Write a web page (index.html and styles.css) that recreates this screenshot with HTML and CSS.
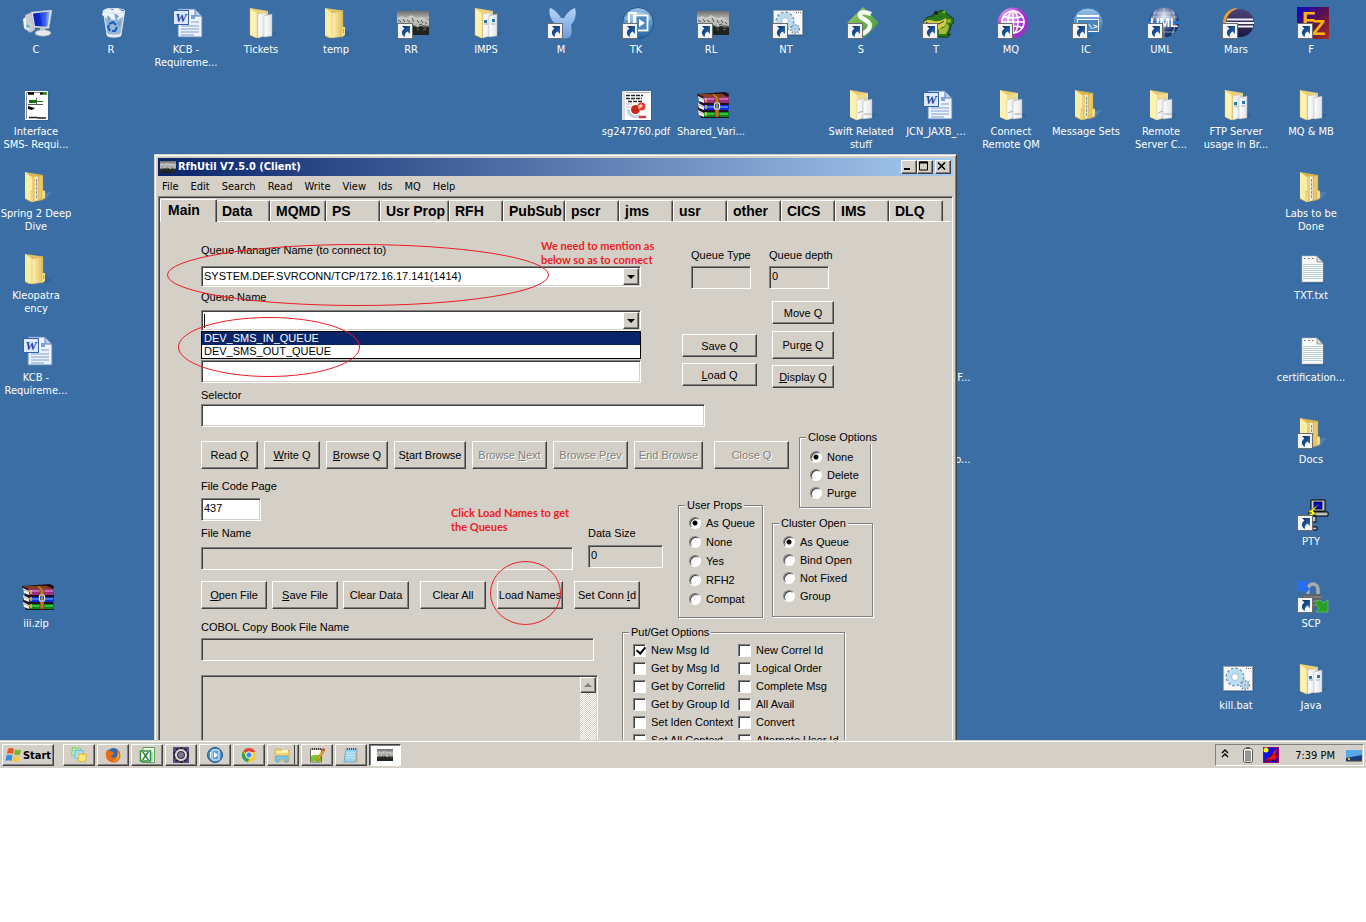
FILE: index.html
```html
<!DOCTYPE html>
<html lang="en">
<head>
<meta charset="utf-8">
<title>RfhUtil V7.5.0 (Client)</title>
<link rel="stylesheet" href="styles.css">
</head>
<body>
<svg class="sprite" aria-hidden="true">
  <defs>
    <linearGradient id="gFold" x1="0" x2="1"><stop offset="0" stop-color="#fdf3b4"/><stop offset="1" stop-color="#e0bc58"/></linearGradient>
    <linearGradient id="gPaper" x1="0" x2="1"><stop offset="0" stop-color="#fff"/><stop offset="1" stop-color="#dfe3e6"/></linearGradient>
    <linearGradient id="gScreen" x1="0" x2="1"><stop offset="0" stop-color="#0a1cb4"/><stop offset=".55" stop-color="#1030d8"/><stop offset="1" stop-color="#9cc4ff"/></linearGradient>
    <linearGradient id="gBlue" x1="0" y1="0" x2="0" y2="1"><stop offset="0" stop-color="#9cc4e8"/><stop offset="1" stop-color="#1c62a4"/></linearGradient>
    <linearGradient id="gArrow" x1="0" y1="0" x2="1" y2="1"><stop offset="0" stop-color="#0c2c64"/><stop offset="1" stop-color="#2a78c8"/></linearGradient>
    <linearGradient id="gFox" x1="0" y1="0" x2="0" y2="1"><stop offset="0" stop-color="#b4d4f8"/><stop offset="1" stop-color="#6c9cdc"/></linearGradient>
    <linearGradient id="gSky" x1="0" y1="0" x2="0" y2="1"><stop offset="0" stop-color="#6c6c6c"/><stop offset=".3" stop-color="#b4b4b0"/><stop offset=".6" stop-color="#6a6c6a"/><stop offset="1" stop-color="#141614"/></linearGradient>
    <linearGradient id="gFz" x1="0" x2="1" y1="0" y2="1"><stop offset="0" stop-color="#0808c8"/><stop offset=".5" stop-color="#5a1050"/><stop offset="1" stop-color="#a83020"/></linearGradient>
    <linearGradient id="gMars" x1="0" y1="0" x2="0" y2="1"><stop offset="0" stop-color="#4c4478"/><stop offset="1" stop-color="#1c1840"/></linearGradient>
    <radialGradient id="gMq" cx=".35" cy=".3"><stop offset="0" stop-color="#f0b8fc"/><stop offset="1" stop-color="#a030cc"/></radialGradient>
    <radialGradient id="gUml" cx=".5" cy=".3"><stop offset="0" stop-color="#e8eef8"/><stop offset="1" stop-color="#1c3470"/></radialGradient>
    <linearGradient id="gGreen" x1="0" y1="0" x2="1" y2="1"><stop offset="0" stop-color="#98d068"/><stop offset="1" stop-color="#3c9038"/></linearGradient>
  </defs>
  <symbol id="arrow" viewBox="0 0 32 32">
    <rect x=".5" y="16.500" width="15" height="15" fill="#f4f4f4" stroke="#6c6c6c"/>
    <path d="M5 19h8v8l-2.500-2.500c-2 1-3 3-2.500 5.500C4 28 4 24 7.500 21.500z" fill="url(#gArrow)"/>
  </symbol>
  <symbol id="computer" viewBox="0 0 32 32">
    <path d="M3 8l7-3 3 1v17l-5 3-5-4z" fill="#c8ccd0" stroke="#6c747c" stroke-width=".6"/>
    <path d="M1 12l1 9 2 2V10zM4 21h3v3z" fill="#f4f4f0"/><circle cx="6" cy="19" r="1.500" fill="#48b8d8"/>
    <path d="M9 5l20-2 1 .5-3 18-15-1z" fill="#dfe3e6" stroke="#a0a6b0" stroke-width=".5"/>
    <path d="M11 6.500L28 4.500l-2.500 15.300-12.500-.8z" fill="url(#gScreen)"/><path d="M18 6l7-1-3 14-2-.3z" fill="#3864f0" opacity=".6"/>
    <path d="M18 20h5l1 5h-6z" fill="#c4c8cc"/><ellipse cx="21" cy="26" rx="8" ry="3.200" fill="#e8eaec" stroke="#9098a0" stroke-width=".6"/>
  </symbol>
  <symbol id="bin" viewBox="0 0 32 32">
    <path d="M6 4h22l-3.500 24c-1 3-14 3-15 0z" fill="#a8c4dc" opacity=".85"/>
    <path d="M6 4l5-3 4 2 5-2 5 3 3 1-2 5-6 3-9-1-6-4z" fill="#f0f4f8"/>
    <path d="M10 8l4 3-3 4zM17 6l5 3-3 5zM20 16l4-3-1 7z" fill="#7ca0c4"/>
    <path d="M12 17l4-2 3 3M20 20l-2 4h-3M13 24l-2-4 1-2" fill="none" stroke="#1c60c4" stroke-width="2.200"/>
    <path d="M7 7l3 20M27 7l-3 20" stroke="#dce8f0" stroke-width="1"/><path d="M9.500 26c3 2 12 2 15 0l-.5 3c-3 2-11 2-14 0z" fill="#e4ecf0"/>
    <ellipse cx="17" cy="4" rx="11" ry="2.500" fill="none" stroke="#d4e4f0"/>
  </symbol>
  <symbol id="word" viewBox="0 0 32 32">
    <path d="M6 2h17l7 7v21H6z" fill="#eef4fe" stroke="#5a80b8"/><path d="M23 2v7h7z" fill="#b8ccec" stroke="#5a80b8"/>
    <rect x="19" y="8" width="4" height="4" fill="#7ca0d4"/><path d="M19 15h8M9 19h18M9 22h18M9 25h18M9 28h13" stroke="#7c9cd0"/>
    <rect x="1.500" y="3.500" width="15" height="14" fill="#dce8fc" stroke="#3460ac"/><text x="9" y="15" class="gw">W</text>
  </symbol>
  <symbol id="folder" viewBox="0 0 32 32">
    <path d="M22 22l8 5-8 4z" fill="#28527f" opacity=".35"/>
    <path d="M3 1l18 2.500v25.500l-14 2-4-2z" fill="#e2c368"/><path d="M3 1l7 5v25l-7-3z" fill="#fbeea4"/>
    <path d="M10 6l11-2.500v26L10 31z" fill="url(#gFold)" stroke="#c4a048" stroke-width=".4"/><path d="M20 20h3v8l-3 2z" fill="#f4dc84"/><rect x="21" y="22" width="1" height="4" fill="#6cb8e0"/>
  </symbol>
  <symbol id="docs" viewBox="0 0 32 32">
    <path d="M23 22l7 4-7 5z" fill="#28527f" opacity=".35"/>
    <path d="M3 1l18 3v25l-12 2-6-3z" fill="#ecd078"/><path d="M3 1l7 5v25l-7-3z" fill="#fdf2b0" stroke="#d8b458" stroke-width=".4"/>
    <path d="M11 7l8-1.500v22.500l-8 3z" fill="url(#gPaper)" stroke="#b8bcc0" stroke-width=".4"/>
    <path d="M17 9l8-2v22l-8 1z" fill="url(#gPaper)" stroke="#a8b0b4" stroke-width=".5"/>
  </symbol>
  <symbol id="docsblue" viewBox="0 0 32 32"><use href="#docs"/><path d="M12 13h3v3h-3zM20 12h3v3h-3z" fill="#2c78a8"/><path d="M12 17h4M19 17h4" stroke="#8cb4cc"/></symbol>
  <symbol id="docslow" viewBox="0 0 32 32">
    <path d="M23 22l7 4-7 5z" fill="#28527f" opacity=".35"/>
    <path d="M3 1l18 3v25l-12 2-6-3z" fill="#e6c870"/><path d="M3 1l7 5v25l-7-3z" fill="#fdf2b0"/><path d="M10 6l11-2v8l-11 2z" fill="#f0dc8c"/>
    <path d="M10 11l8-2v19l-8 3z" fill="url(#gPaper)" stroke="#a8acb0" stroke-width=".4"/><path d="M16 12l9-2v19l-9 1z" fill="url(#gPaper)" stroke="#a0a8ac" stroke-width=".5"/><path d="M11 24l5-2M17 25h8" stroke="#a8acb0"/>
  </symbol>
  <symbol id="stack" viewBox="0 0 32 32">
    <path d="M22 22l8-1-8 9z" fill="#6c98c4" opacity=".5"/>
    <path d="M3 1l18 3v25l-12 2-6-3z" fill="#d8b450"/><path d="M3 1l7 5v25l-7-4z" fill="#fbeea4"/>
    <path d="M10 6l4-1v25l-4 1z" fill="#eccf74"/><path d="M13 6l3-.5V29l-3 1z" fill="#f4f0e0"/><path d="M14.500 8v20" stroke="#8090b0" stroke-dasharray="3 1"/><path d="M16 5l5-1v24l-5 2z" fill="#e8c868" stroke="#b89038" stroke-width=".4"/><path d="M9 20l2 1v10h-2zM20 19l3 1v7l-3 2z" fill="#f8e494" stroke="#c09838" stroke-width=".4"/>
  </symbol>
  <symbol id="photo" viewBox="0 0 32 24">
    <rect width="32" height="24" fill="url(#gSky)"/>
    <path d="M0 7l5-2 4 2 5-3 6 3 5-1 7 4v5l-6-1-5 2-6-3-5 2-5-1-5 2z" fill="#d4d4d0" opacity=".7"/>
    <path d="M1 9l3 2M6 8l2 3M10 9l3 2M15 7l2 4M20 9l2 3M24 9l2 3M28 11l2 2M4 13l2-1M13 13l2-1M22 14l3-1" fill="none" stroke="#444" stroke-width=".9"/>
    <path d="M0 17l3-2 3 2 4-2 3 1 4-1 3 2 4-2 3 2 5-1v8H0z" fill="#20241e"/><path d="M2 19l3-1M12 17l2 1M20 18l2 1M26 19l3-1" stroke="#6c7068"/>
  </symbol>
  <symbol id="shot" viewBox="0 0 32 32"><use href="#photo" x="0" y="4" width="32" height="24"/></symbol>
  <symbol id="fox" viewBox="0 0 32 32"><path d="M3 1c4 1 9 6 11 10h3c2-4 7-9 11-10 2 6 0 13-4 17 1 5 1 9-1 12-5 3-11 1-13 0V18C4 14 1 7 3 1z" fill="url(#gFox)"/></symbol>
  <symbol id="play" viewBox="0 0 32 32">
    <circle cx="16" cy="16" r="15.500" fill="url(#gBlue)" stroke="#1c5488"/><path d="M3 12C8 3 24 3 29 12c-8 6-18 6-26 0z" fill="#fff" opacity=".3"/>
    <path d="M11 6H7v13M15 6h-3v13" fill="none" stroke="#fff" stroke-width="2"/><rect x="13.500" y="8.500" width="12" height="15" fill="#4888bc" stroke="#fff" stroke-width="1.800"/><path d="M17 12l6 4-6 4z" fill="#fff"/>
  </symbol>
  <symbol id="gears" viewBox="0 0 32 32">
    <rect x="2" y="4" width="30" height="25" fill="#28527f" opacity=".5"/><rect x="1.500" y="3.500" width="29" height="24" fill="#f6f8fa" stroke="#9ca4ac"/><path d="M24 5.500h5" stroke="#567" stroke-dasharray="1 1"/>
    <circle cx="13" cy="14" r="8" fill="none" stroke="#7494b4" stroke-width="3" stroke-dasharray="2.500 1.700"/><circle cx="13" cy="14" r="6" fill="none" stroke="#b8dcf0" stroke-width="4.500"/><circle cx="13" cy="14" r="3.500" fill="#fff" stroke="#6c90b0" stroke-width=".6"/>
    <circle cx="23" cy="22" r="4" fill="none" stroke="#6c8cac" stroke-width="2" stroke-dasharray="1.500 1.100"/><circle cx="23" cy="22" r="2.700" fill="#fff" stroke="#a8cce4" stroke-width="2"/><circle cx="23" cy="22" r="1" fill="#6c8cac"/>
  </symbol>
  <symbol id="soap" viewBox="0 0 32 32">
    <path d="M16 0l16 16-16 16L0 16z" fill="url(#gGreen)"/><path d="M24 7c-7-3-12-2-11 2 1 3 9 4 10 9 0 4-4 8-9 9" fill="none" stroke="#f4faf0" stroke-width="4.500"/>
  </symbol>
  <symbol id="frog" viewBox="0 0 32 32">
    <path d="M11 9c0-4 3-5 5-3 2-4 7-3 8 0l5 4c4 1 4 6 0 8-1 5-2 9-4 10l4-1-3 3h-8L7 26 3 20c-3-4 0-11 8-11z" fill="#2c7818" stroke="#123808"/>
    <path d="M2 15c3-3 7-2 10-1 5 1 8-1 12-3 2 5-1 9-5 10-6 5-15 2-17-6z" fill="#d8c848"/><circle cx="14" cy="6" r="2" fill="#182808"/><circle cx="22" cy="5" r="1.500" fill="#70b830"/><path d="M4 15c5 4 13 3 18-1M20 20l6 7" fill="none" stroke="#204808"/><circle cx="27" cy="14" r="2" fill="#98b030"/><path d="M17 22c4 0 7-3 8-6l2 4-3 7h-7z" fill="#a8b838"/>
  </symbol>
  <symbol id="globe" viewBox="0 0 32 32">
    <circle cx="16" cy="16" r="15.500" fill="url(#gMq)"/><g fill="none" stroke="#fff" stroke-width="1.600"><circle cx="16" cy="15" r="11"/><ellipse cx="16" cy="15" rx="5" ry="11"/><path d="M5 15h22M16 4v22M7 9.500c6 2 12 2 18 0M7 20.500c6-2 12-2 18 0"/></g>
  </symbol>
  <symbol id="term" viewBox="0 0 32 32">
    <circle cx="16" cy="16" r="15" fill="url(#gBlue)" stroke="#3878b0"/><path d="M5 9h22" stroke="#fff" stroke-width="2"/><rect x="5.500" y="12.500" width="21" height="12" fill="#4888bc" stroke="#fff"/><text x="16" y="22" class="gt">C:\&gt;</text>
  </symbol>
  <symbol id="uml" viewBox="0 0 32 32">
    <circle cx="17" cy="15.500" r="15" fill="url(#gUml)"/><path d="M4 10h26M6 6h22M6 25h22M17 1v30M9 3c-4 8-4 17 0 25M25 3c4 8 4 17 0 25" fill="none" stroke="#dce8f4" stroke-width=".6"/>
    <rect x="1" y="14" width="31" height="3" fill="#2474cc"/><text x="17" y="20" class="gu">UML</text>
  </symbol>
  <symbol id="mars" viewBox="0 0 32 32">
    <path d="M16 1C6 1 1 8 1 16s5 13 11 14C4 20 6 6 16 1z" fill="#f09c34"/><circle cx="18" cy="16" r="14" fill="url(#gMars)"/><path d="M5 12.500h26M4 16h28M5 19.500h26" stroke="#f0f0f8" stroke-width="1.800"/>
  </symbol>
  <symbol id="fz" viewBox="0 0 32 32"><rect width="32" height="32" fill="url(#gFz)"/><text x="5" y="20" class="gf">F</text><text x="15" y="28" class="gf">Z</text></symbol>
  <symbol id="thumb" viewBox="0 0 32 32">
    <rect x="4" y="3" width="24" height="29" fill="#28527f" opacity=".5"/><rect x="3" y="2" width="23" height="29" fill="#fff"/><path d="M4.500 30V3.500H24" fill="none" stroke="#888"/>
    <path d="M6 4.500h6" stroke="#000" stroke-width="2.500"/><path d="M18 4.500h3" stroke="#0a200a" stroke-width="2.500"/><path d="M21 4.500h4" stroke="#2a8410" stroke-width="2.500"/><path d="M7 12.500h7" stroke="#087808" stroke-width="3"/><path d="M15 12.500h6" stroke="#087808"/><path d="M14.500 9v6M6 15.500h15" stroke="#555"/><path d="M6 17l3 1 4 1-3 2-4-1z" fill="#000"/><path d="M7 28.500h8M15 29h9" stroke="#222" stroke-width="1.400"/>
  </symbol>
  <symbol id="pdf" viewBox="0 0 32 32">
    <rect x="1" y="3" width="29" height="29" fill="#28527f" opacity=".5"/><rect x="0" y="2" width="29" height="29" fill="#fff"/><rect x="0" y="2" width="3" height="29" fill="#dcdce4"/>
    <path d="M4 6.500h17M4 9.500h16M6 12.500h14" stroke="#222" stroke-width="1.600" stroke-dasharray="4 1"/><path d="M4 3.500h24" stroke="#aab"/><path d="M6 20c0 7 7 9 12 7" fill="none" stroke="#c8d0dc" stroke-width="3"/><path d="M4 15h6M4 18h5" stroke="#d8b0a8"/><circle cx="13.500" cy="20.500" r="4.500" fill="#c82818"/><circle cx="19.500" cy="17.500" r="4" fill="#e04030"/><path d="M16 17l3-2 2 2-4 3z" fill="#f8c8c0"/><path d="M17 28h7" stroke="#d83838" stroke-width="2.500"/>
  </symbol>
  <symbol id="rar" viewBox="0 0 32 32">
    <path d="M0 5l3 8-2 7 3 9h28v-6l-2-3 2-3v-4l-1-3 1-5-4-2z" fill="#20101c"/>
    <path d="M1 5h24l6 3H7z" fill="#883c20"/><path d="M6 8h26v6H7z" fill="#983080"/><path d="M7 10h24" stroke="#e088d0" stroke-width="1.300"/>
    <path d="M7 16h25v5H7z" fill="#1030d8"/><path d="M7 18h24" stroke="#6c98ff" stroke-width="1.300"/><path d="M7 23h25v5H7z" fill="#088818"/><path d="M7 25h24" stroke="#50d858" stroke-width="1.300"/>
    <path d="M1 7l6 3v4l-5-2zM1 14l6 3v4l-5-2zM1 21l6 3v4l-5-2z" fill="#f4f0e8"/><path d="M2 9l5 2M2 16l5 2M2 23l5 2" stroke="#888" stroke-width=".6"/>
    <path d="M9 9v18" stroke="#e8c040" stroke-width="1.500" stroke-dasharray="4 3"/><path d="M14 5h4l4 4v19h-4V9z" fill="#b87828" stroke="#583008" stroke-width=".6"/><rect x="17.500" y="14" width="5" height="6" rx="1" fill="#444" stroke="#e8e8e8" stroke-width="1.200"/><path d="M20 15v6" stroke="#ccc"/>
  </symbol>
  <symbol id="txt" viewBox="0 0 32 32">
    <path d="M6 5h15l6 6v20H6z" fill="#28527f" opacity=".6"/><path d="M5 3h15l6 6v20H5z" fill="#fbfbf9" stroke="#b0b4b4" stroke-width=".6"/><path d="M20 3v6h6z" fill="#dcdcdc" stroke="#777" stroke-width=".7"/>
    <path d="M7 5.500h12" stroke="#667" stroke-width="1.200" stroke-dasharray="1.500 2.500"/><path d="M6 11.500h19M6 13.500h19M6 15.500h19M6 17.500h19M6 19.500h19M6 21.500h19M6 23.500h19M6 25.500h19" stroke="#b8d0d0"/>
  </symbol>
  <symbol id="putty" viewBox="0 0 32 32">
    <path d="M14 1h14v11H14z" fill="#c8c8c8" stroke="#000"/><rect x="17" y="3" width="8" height="7" fill="#0000e0" stroke="#000" stroke-width=".8"/><path d="M12 13h19v4H12zM5 17h14v6H5z" fill="#c0c0c0" stroke="#000"/><path d="M9 28h11v3H9z" fill="#c0c0c0" stroke="#000"/><path d="M22 5L11 13l4 1-9 5 13-4-3-3z" fill="#ff0" stroke="#333" stroke-width=".5"/>
  </symbol>
  <symbol id="scp" viewBox="0 0 32 32">
    <path d="M11 14V9c0-8 10-8 10 0v5" fill="none" stroke="#aaa" stroke-width="3.500"/><rect x="7" y="13" width="18" height="14" fill="#5c6468"/><path d="M7 16h18M7 20h18M7 24h18" stroke="#7c8488" stroke-width="1.500"/>
    <path d="M0 0h12L9 4l4 4-4 4-5-4-4 4z" fill="#2470f0"/><path d="M19 20l4-1 3 3 5-3v12H19l3-4-3-3z" fill="#28a028" stroke="#70d060" stroke-width=".6"/>
  </symbol>
  <symbol id="flag" viewBox="0 0 16 16"><path d="M3 2c2-1.500 4-1 6 0L8 7c-2-1-4-1-6 0z" fill="#e8542c"/><path d="M10 2.500c2 1 4 1 6 0l-1 5c-2 1-4 1-6 0z" fill="#78b82c"/><path d="M1.500 8.500c2-1 4-1 6 0l-1 5.500c-2-1-4-1-6 0z" fill="#3c88dc"/><path d="M8.500 9c2 1 4 1 6 0l-1 5c-2 1-4 1-6 0z" fill="#f8c82c"/></symbol>
  <symbol id="notes" viewBox="0 0 16 16"><rect x="1" y="1" width="8" height="8" fill="#b8f0a0" stroke="#80d078" transform="rotate(8 5 5)"/><rect x="4" y="3.500" width="8" height="8" fill="#a8e0f8" stroke="#70b8e0" transform="rotate(5 8 7)"/><rect x="7.500" y="7" width="7.500" height="7.500" fill="#fce878" stroke="#e0b838" transform="rotate(6 11 11)"/></symbol>
  <symbol id="firefox" viewBox="0 0 16 16"><circle cx="8.500" cy="7.500" r="6.500" fill="#2c68b8"/><path d="M1 5l2-3 1 2c3 0 5 1 5 3L6 9c1 3 6 2 6-1 1-3 0-5-1-6 5 2 6 8 2 12C8 18-1 14 1 5z" fill="#e46c14"/><path d="M13 5c3 5-1 10-5 9 3 0 5-4 5-9z" fill="#f8b828"/></symbol>
  <symbol id="excel" viewBox="0 0 16 16"><path d="M4 .5h11.500v15H3z" fill="#f4fcf0" stroke="#58a058"/><rect x="1.500" y="4" width="10" height="10" fill="#fff" stroke="#2c8c3c" stroke-width="1.500"/><path d="M13 5v9" stroke="#78b878"/><text x="6.500" y="12.500" class="gx">X</text></symbol>
  <symbol id="cog" viewBox="0 0 16 16"><rect width="16" height="16" fill="#5c4888"/><circle cx="8" cy="8" r="6.300" fill="none" stroke="#222" stroke-width="3" stroke-dasharray="2.600 1.400"/><circle cx="8" cy="8" r="5" fill="#807898" stroke="#dcdce0" stroke-width="2.200"/><circle cx="8" cy="8" r="3.500" fill="none" stroke="#333"/></symbol>
  <symbol id="pplay" viewBox="0 0 16 16"><circle cx="8" cy="8" r="7.500" fill="#4c8ccc" stroke="#1c5488"/><rect x="5" y="3" width="7" height="10" rx="1" fill="#58a0dc" stroke="#fff"/><path d="M7 5l4 3-4 3z" fill="#fff"/><path d="M3.500 5v6" stroke="#fff"/></symbol>
  <symbol id="chrome" viewBox="0 0 16 16"><circle cx="8" cy="8" r="7" fill="#f8cc30"/><path d="M8 8L2 4.300C5-.5 12-.2 14.500 5H8z" fill="#e04838"/><path d="M2 4.300L5.500 10l3 1-1.500 4C1 14-.5 8 2 4.300z" fill="#38a050"/><circle cx="8" cy="8" r="3.200" fill="#4888e8" stroke="#fff"/></symbol>
  <symbol id="explorer" viewBox="0 0 16 16"><path d="M1 2h5l1 1h8v11H1z" fill="#f0d470" stroke="#c8a840" stroke-width=".7"/><path d="M2 5h12M8 3.500h6" stroke="#fff4c0" stroke-width="1.400"/><path d="M2 15V9h12v6h-3v-3H5v3z" fill="#80ccf0" stroke="#4898c8" stroke-width=".7"/></symbol>
  <symbol id="npp" viewBox="0 0 16 16"><path d="M1.500 2h11v13h-11z" fill="#fcfcf0" stroke="#666"/><path d="M3 2h9" stroke="#444" stroke-width="2" stroke-dasharray="1 1"/><path d="M2 9c3-2 6 0 10-1v6.500H2z" fill="#78c828"/><path d="M14 2l2 1-6 10-2 1V12z" fill="#f8a828" stroke="#885010" stroke-width=".5"/><path d="M14 1l2 1-1 2-2-1z" fill="#d83030"/></symbol>
  <symbol id="pad" viewBox="0 0 16 16"><path d="M3 2h11l-1 13H1z" fill="#98d4ec" stroke="#6898b0" stroke-width=".7"/><path d="M4 2h10" stroke="#556" stroke-width="2" stroke-dasharray="1 1"/><path d="M3 6h9M3 8.500h9M3 11h9" stroke="#c8ecf8"/><path d="M14 3l1 11-2 1z" fill="#d0a860"/></symbol>
  <symbol id="ktray" viewBox="0 0 16 16"><rect width="16" height="16" fill="#1010e8" stroke="#f00"/><circle cx="3" cy="3" r="2.500" fill="#fff800"/><path d="M8 14c-3 0-6 1-7 1 3-4 5-4 7-6l4-6 2-1-1 4 2 4-3 2 1 2-3-2z" fill="#f01010"/><path d="M2 15c4-4 6-1 12-1M6 10l4-3M13 6v4" stroke="#400" fill="none"/></symbol>
  <symbol id="monitor" viewBox="0 0 16 16"><rect y="3" width="16" height="11" fill="#1c3c78"/><path d="M0 3h16v5L0 11z" fill="#58a8ec"/><path d="M0 14h16" stroke="#444"/><path d="M2 12h2" stroke="#e8c040" stroke-width="2"/></symbol>
</svg>

<main class="desktop">
  <nav class="icons" aria-label="Desktop">
    <a href="#" class="item r1 c1"><svg><use href="#computer"/></svg><span>C</span></a>
    <a href="#" class="item r1 c2"><svg><use href="#bin"/></svg><span>R</span></a>
    <a href="#" class="item r1 c3"><svg><use href="#word"/></svg><span>KCB - Requireme...</span></a>
    <a href="#" class="item r1 c4"><svg><use href="#docs"/></svg><span>Tickets</span></a>
    <a href="#" class="item r1 c5"><svg><use href="#folder"/></svg><span>temp</span></a>
    <a href="#" class="item r1 c6"><svg><use href="#shot"/><use href="#arrow"/></svg><span>RR</span></a>
    <a href="#" class="item r1 c7"><svg><use href="#docsblue"/></svg><span>IMPS</span></a>
    <a href="#" class="item r1 c8"><svg><use href="#fox"/><use href="#arrow"/></svg><span>M</span></a>
    <a href="#" class="item r1 c9"><svg><use href="#play"/><use href="#arrow"/></svg><span>TK</span></a>
    <a href="#" class="item r1 c10"><svg><use href="#shot"/><use href="#arrow"/></svg><span>RL</span></a>
    <a href="#" class="item r1 c11"><svg><use href="#gears"/><use href="#arrow"/></svg><span>NT</span></a>
    <a href="#" class="item r1 c12"><svg><use href="#soap"/><use href="#arrow"/></svg><span>S</span></a>
    <a href="#" class="item r1 c13"><svg><use href="#frog"/><use href="#arrow"/></svg><span>T</span></a>
    <a href="#" class="item r1 c14"><svg><use href="#globe"/><use href="#arrow"/></svg><span>MQ</span></a>
    <a href="#" class="item r1 c15"><svg><use href="#term"/><use href="#arrow"/></svg><span>IC</span></a>
    <a href="#" class="item r1 c16"><svg><use href="#uml"/><use href="#arrow"/></svg><span>UML</span></a>
    <a href="#" class="item r1 c17"><svg><use href="#mars"/><use href="#arrow"/></svg><span>Mars</span></a>
    <a href="#" class="item r1 c18"><svg><use href="#fz"/><use href="#arrow"/></svg><span>F</span></a>

    <a href="#" class="item r2 c1"><svg><use href="#thumb"/></svg><span>Interface SMS- Requi...</span></a>
    <a href="#" class="item r2 c9"><svg><use href="#pdf"/></svg><span>sg247760.pdf</span></a>
    <a href="#" class="item r2 c10"><svg><use href="#rar"/></svg><span>Shared_Vari...</span></a>
    <a href="#" class="item r2 c12"><svg><use href="#docslow"/></svg><span>Swift Related stuff</span></a>
    <a href="#" class="item r2 c13"><svg><use href="#word"/></svg><span>JCN_JAXB_...</span></a>
    <a href="#" class="item r2 c14"><svg><use href="#docslow"/></svg><span>Connect Remote QM</span></a>
    <a href="#" class="item r2 c15"><svg><use href="#stack"/></svg><span>Message Sets</span></a>
    <a href="#" class="item r2 c16"><svg><use href="#docslow"/></svg><span>Remote Server C...</span></a>
    <a href="#" class="item r2 c17"><svg><use href="#docsblue"/></svg><span>FTP Server usage in Br...</span></a>
    <a href="#" class="item r2 c18"><svg><use href="#docs"/></svg><span>MQ &amp; MB</span></a>

    <a href="#" class="item r3 c1"><svg><use href="#stack"/></svg><span>Spring 2 Deep Dive</span></a>
    <a href="#" class="item r4 c1"><svg><use href="#folder"/></svg><span>Kleopatra<br>ency</span></a>
    <a href="#" class="item r5 c1"><svg><use href="#word"/></svg><span>KCB - Requireme...</span></a>
    <a href="#" class="item r8 c1"><svg><use href="#rar"/></svg><span>iii.zip</span></a>
    <a href="#" class="item tail r5 c13"><span>F...</span></a>
    <a href="#" class="item tail r6 c13"><span>o...</span></a>

    <a href="#" class="item r3 c18"><svg><use href="#stack"/></svg><span>Labs to be Done</span></a>
    <a href="#" class="item r4 c18"><svg><use href="#txt"/></svg><span>TXT.txt</span></a>
    <a href="#" class="item r5 c18"><svg><use href="#txt"/></svg><span>certification...</span></a>
    <a href="#" class="item r6 c18"><svg><use href="#stack"/><use href="#arrow"/></svg><span>Docs</span></a>
    <a href="#" class="item r7 c18"><svg><use href="#putty"/><use href="#arrow"/></svg><span>PTY</span></a>
    <a href="#" class="item r8 c18"><svg><use href="#scp"/><use href="#arrow"/></svg><span>SCP</span></a>
    <a href="#" class="item r9 c17"><svg><use href="#gears"/></svg><span>kill.bat</span></a>
    <a href="#" class="item r9 c18"><svg><use href="#docsblue"/></svg><span>Java</span></a>
  </nav>

  <section class="window" aria-label="RfhUtil">
    <header class="titlebar">
      <svg class="appicon"><use href="#photo"/></svg>
      <h1>RfhUtil V7.5.0 (Client)</h1>
      <div class="controls">
        <button class="ctl" aria-label="Minimize"><svg viewBox="0 0 12 10"><path d="M2 8h6" stroke="#000" stroke-width="2"/></svg></button>
        <button class="ctl" aria-label="Maximize"><svg viewBox="0 0 12 10"><path d="M1.500 1v8h8V1z" fill="none" stroke="#000"/><path d="M1 1.500h9" stroke="#000" stroke-width="2"/></svg></button>
        <button class="ctl close" aria-label="Close"><svg viewBox="0 0 12 10"><path d="M2 1.500l7 7M9 1.500l-7 7" stroke="#000" stroke-width="1.600"/></svg></button>
      </div>
    </header>
    <nav class="menu" aria-label="Menu">
      <button>File</button><button>Edit</button><button>Search</button><button>Read</button><button>Write</button><button>View</button><button>Ids</button><button>MQ</button><button>Help</button>
    </nav>
    <div class="client">
      <div class="tabs" role="tablist">
        <button role="tab" aria-selected="true" class="tab on">Main</button><button role="tab" class="tab">Data</button><button role="tab" class="tab w56">MQMD</button><button role="tab" class="tab">PS</button><button role="tab" class="tab w69">Usr Prop</button><button role="tab" class="tab">RFH</button><button role="tab" class="tab w62">PubSub</button><button role="tab" class="tab">pscr</button><button role="tab" class="tab">jms</button><button role="tab" class="tab">usr</button><button role="tab" class="tab">other</button><button role="tab" class="tab">CICS</button><button role="tab" class="tab">IMS</button><button role="tab" class="tab">DLQ</button>
      </div>
      <form class="panel">
        <div class="top">
          <div class="names">
            <label for="qm">Queue Manager Name (to connect to)</label>
            <div class="combo"><input id="qm" type="text" value="SYSTEM.DEF.SVRCONN/TCP/172.16.17.141(1414)"><button type="button" aria-label="Show queue managers"><svg viewBox="0 0 8 4"><path d="M0 0h8L4 4z"/></svg></button></div>
            <label for="qn" class="qname">Queue Name</label>
            <div class="combo caret"><input id="qn" type="text"><button type="button" aria-label="Show queues"><svg viewBox="0 0 8 4"><path d="M0 0h8L4 4z"/></svg></button>
              <ul class="list" role="listbox"><li role="option" aria-selected="true">DEV_SMS_IN_QUEUE</li><li role="option">DEV_SMS_OUT_QUEUE</li></ul>
            </div>
            <input class="field remote" type="text" aria-label="Remote queue manager">
          </div>
          <div class="side">
            <div class="info">
              <div><label for="qt">Queue Type</label><input id="qt" class="field off" type="text" readonly></div>
              <div><label for="qd">Queue depth</label><input id="qd" class="field off" type="text" value="0" readonly></div>
            </div>
            <div class="ops">
              <div class="saves"><button type="button" class="btn low">Save Q</button><button type="button" class="btn low"><u>L</u>oad Q</button></div>
              <div class="moves"><button type="button" class="btn low">Move Q</button><button type="button" class="btn">Pur<u>ge</u> Q</button><button type="button" class="btn low"><u>D</u>isplay Q</button></div>
            </div>
          </div>
        </div>
        <label for="sel">Selector</label>
        <input id="sel" class="field selector" type="text">

        <div class="browse">
          <button type="button" class="btn w57">Read <u>Q</u></button>
          <button type="button" class="btn w56"><u>W</u>rite Q</button>
          <button type="button" class="btn w62"><u>B</u>rowse Q</button>
          <button type="button" class="btn w72">S<u>t</u>art Browse</button>
          <button type="button" class="btn w75" disabled>Browse <u>N</u>ext</button>
          <button type="button" class="btn w75" disabled>Browse P<u>r</u>ev</button>
          <button type="button" class="btn w69" disabled>End Browse</button>
          <button type="button" class="btn w75 closeq" disabled>Close Q</button>
          <fieldset class="closeopts"><legend>Close Options</legend>
            <label><input type="radio" name="close" checked>None</label>
            <label><input type="radio" name="close">Delete</label>
            <label><input type="radio" name="close">Purge</label>
          </fieldset>
        </div>

        <div class="middle">
          <div class="file">
            <label for="cp">File Code Page</label>
            <input id="cp" class="field codepage" type="text" value="437">
            <div class="filerow">
              <div class="grow"><label for="fn">File Name</label><input id="fn" class="field off fname" type="text" readonly></div>
              <div class="size"><label for="ds">Data Size</label><input id="ds" class="field off" type="text" value="0" readonly></div>
            </div>
            <div class="filebtns">
              <button type="button" class="btn"><u>O</u>pen File</button>
              <button type="button" class="btn"><u>S</u>ave File</button>
              <button type="button" class="btn">Clear Data</button>
              <button type="button" class="btn wide">Clear All</button>
              <button type="button" class="btn wide">Load Names</button>
              <button type="button" class="btn wide">Set Conn <u>I</u>d</button>
            </div>
          </div>
          <fieldset class="props"><legend>User Props</legend>
            <label><input type="radio" name="props" checked>As Queue</label>
            <label><input type="radio" name="props">None</label>
            <label><input type="radio" name="props">Yes</label>
            <label><input type="radio" name="props">RFH2</label>
            <label><input type="radio" name="props">Compat</label>
          </fieldset>
          <fieldset class="cluster"><legend>Cluster Open</legend>
            <label><input type="radio" name="cluster" checked>As Queue</label>
            <label><input type="radio" name="cluster">Bind Open</label>
            <label><input type="radio" name="cluster">Not Fixed</label>
            <label><input type="radio" name="cluster">Group</label>
          </fieldset>
        </div>

        <div class="bottom">
          <div class="cobol">
            <label for="cb">COBOL Copy Book File Name</label>
            <input id="cb" class="field off" type="text" readonly>
            <div class="log"><textarea aria-label="Messages" readonly></textarea><div class="bar"><button type="button" aria-label="Scroll up"><svg viewBox="0 0 8 4"><path d="M0 4h8L4 0z"/></svg></button></div></div>
          </div>
          <fieldset class="putget"><legend>Put/Get Options</legend>
            <div class="checks">
              <label><input type="checkbox" checked>New Msg Id</label><label><input type="checkbox">New Correl Id</label>
              <label><input type="checkbox">Get by Msg Id</label><label><input type="checkbox">Logical Order</label>
              <label><input type="checkbox">Get by Correlid</label><label><input type="checkbox">Complete Msg</label>
              <label><input type="checkbox">Get by Group Id</label><label><input type="checkbox">All Avail</label>
              <label><input type="checkbox">Set Iden Context</label><label><input type="checkbox">Convert</label>
              <label><input type="checkbox">Set All Context</label><label><input type="checkbox">Alternate User Id</label>
            </div>
          </fieldset>
        </div>
      </form>
    </div>
  </section>

  <svg class="marks" viewBox="0 0 570 640" aria-hidden="true">
    <g fill="none" stroke="#ed1c24"><ellipse cx="358" cy="275" rx="190.500" ry="30.500"/><ellipse cx="269" cy="347" rx="90.500" ry="29.500"/><ellipse cx="525.500" cy="593" rx="35" ry="31.500"/></g>
  </svg>
  <p class="note connect">We need to mention as<br>below so as to connect</p>
  <p class="note load">Click Load Names to get<br>the Queues</p>
</main>

<footer class="taskbar">
  <button class="task start"><svg><use href="#flag"/></svg>Start</button>
  <div class="tasks">
    <button class="task" aria-label="Sticky Notes"><svg><use href="#notes"/></svg></button>
    <button class="task" aria-label="Firefox"><svg><use href="#firefox"/></svg></button>
    <button class="task" aria-label="Excel"><svg><use href="#excel"/></svg></button>
    <button class="task" aria-label="Eclipse"><svg><use href="#cog"/></svg></button>
    <button class="task" aria-label="Toolkit"><svg><use href="#pplay"/></svg></button>
    <button class="task" aria-label="Chrome"><svg><use href="#chrome"/></svg></button>
    <button class="task multi" aria-label="Explorer"><svg><use href="#explorer"/></svg></button>
    <button class="task" aria-label="Editor"><svg><use href="#npp"/></svg></button>
    <button class="task" aria-label="Notepad"><svg><use href="#pad"/></svg></button>
    <button class="task current" aria-label="RfhUtil"><svg><use href="#photo"/></svg></button>
  </div>
  <div class="tray">
    <svg viewBox="0 0 16 16"><path d="M5 6l3-3 3 3M5 10l3-3 3 3" fill="none" stroke="#000" stroke-width="1.400"/></svg>
    <svg viewBox="0 0 16 16"><rect x="6" y="0" width="4" height="2" fill="#666"/><rect x="3.500" y="1.500" width="9" height="14" rx="2" fill="#fff" stroke="#555"/><rect x="5.500" y="4" width="5" height="10" fill="#999" stroke="#666" stroke-width=".6"/></svg>
    <svg><use href="#ktray"/></svg>
    <time>7:39 PM</time>
    <svg><use href="#monitor"/></svg>
  </div>
</footer>
</body>
</html>
```
FILE: styles.css
```css
:root {
  --face: #d4d0c8;
  --shade: #808080;
  --dark: #404040;
  --ui: "DejaVu Sans Condensed", "Noto Sans", sans-serif;
  --form: "Liberation Sans", Arial, sans-serif;
}
* { box-sizing: border-box; }
body { margin: 0; background: #fff; font: 11px/13px var(--ui); color: #000; }
button, input, textarea { font: inherit; color: inherit; margin: 0; border-radius: 0; }
button { padding: 0; }
.sprite { position: absolute; width: 0; height: 0; visibility: hidden; }

/* Lettering inside icons */
.gw { font: italic bold 13px "Liberation Serif", serif; fill: #1c489c; text-anchor: middle; }
.gt { font: bold 8px "Liberation Mono", monospace; fill: #fff; text-anchor: middle; }
.gu { font: bold 13px "Liberation Sans", sans-serif; fill: #fff; text-anchor: middle; }
.gf { font: bold 22px "Liberation Sans", sans-serif; fill: #fcb408; }
.gx { font: bold 11px "Liberation Sans", sans-serif; fill: #1c7c30; text-anchor: middle; }

/* Desktop */
.desktop { position: relative; overflow: hidden; background: #3a6ea5; padding-bottom: 2px; }
.icons { display: grid; grid-template-columns: repeat(18, minmax(0, 1fr)); grid-template-rows: repeat(9, 82px); padding-right: 16px; }
.item { display: flex; flex-direction: column; align-items: center; padding-top: 7px; color: #fff; text-decoration: none; text-align: center; }
.item svg { width: 32px; height: 32px; flex: none; }
.item span { width: 72px; margin: 4px 3px 0 0; }
.tail { padding-top: 43px; }
.tail span { margin: 0 6px 0 0; text-align: right; }
.r1 { grid-row: 1; } .r2 { grid-row: 2; } .r3 { grid-row: 3; }
.r4 { grid-row: 4; } .r5 { grid-row: 5; } .r6 { grid-row: 6; }
.r7 { grid-row: 7; } .r8 { grid-row: 8; } .r9 { grid-row: 9; }
.c1 { grid-column: 1; } .c2 { grid-column: 2; } .c3 { grid-column: 3; }
.c4 { grid-column: 4; } .c5 { grid-column: 5; } .c6 { grid-column: 6; }
.c7 { grid-column: 7; } .c8 { grid-column: 8; } .c9 { grid-column: 9; }
.c10 { grid-column: 10; } .c11 { grid-column: 11; } .c12 { grid-column: 12; }
.c13 { grid-column: 13; } .c14 { grid-column: 14; } .c15 { grid-column: 15; }
.c16 { grid-column: 16; } .c17 { grid-column: 17; } .c18 { grid-column: 18; }

/* Window */
.window { position: absolute; left: 154px; right: 409px; top: 154px; min-width: 803px; padding: 3px; background: var(--face); border: 1px solid; border-color: var(--face) var(--dark) var(--dark) var(--face); box-shadow: inset 1px 1px #fff, inset -1px -1px var(--shade); }
.titlebar { display: flex; align-items: center; height: 18px; padding: 0 2px; gap: 2px; background: linear-gradient(90deg, #0a246a, #a6caf0); color: #fff; }
.titlebar h1 { flex: 1; margin: 0; font-size: 11px; line-height: 18px; }
.appicon { width: 16px; height: 12px; }
.controls { display: flex; }
.ctl { display: flex; width: 16px; height: 14px; background: var(--face); border: 1px solid; border-color: #fff var(--dark) var(--dark) #fff; box-shadow: inset -1px -1px var(--shade); }
.ctl svg { width: 12px; height: 10px; }
.close { margin-left: 2px; }
.menu { display: flex; gap: 12px; height: 20px; padding-left: 4px; }
.menu button { border: 0; background: none; }
.client { border: 1px solid; border-color: var(--shade) #fff #fff var(--shade); box-shadow: inset 1px 1px var(--dark); padding: 1px 1px 0; }
.tabs { display: flex; align-items: flex-end; padding-top: 1px; border-bottom: 1px solid #fff; font: bold 14px/20px var(--form); }
.tab { width: 54px; height: 21px; padding-left: 5px; text-align: left; background: var(--face); border: 1px solid; border-color: #fff var(--dark) transparent #fff; border-bottom: 0; border-radius: 2px 2px 0 0; box-shadow: inset -1px 0 var(--shade); white-space: nowrap; }
.tab.on { width: 57px; height: 23px; margin-bottom: -1px; padding: 0 0 2px 7px; }
.tab.on + .tab { width: 53px; padding-left: 5px; border-left: 0; }
.tab.w56 { width: 56px; } .tab.w62 { width: 62px; } .tab.w69 { width: 69px; }
.panel { padding: 0 40px 12px 41px; font: 11px/14px var(--form); }
.panel label { display: block; white-space: nowrap; }

/* Controls */
.btn { height: 28px; background: var(--face); border: 1px solid; border-color: #fff var(--dark) var(--dark) #fff; box-shadow: inset -1px -1px var(--shade); white-space: nowrap; }
.btn.low { height: 23px; }
.btn:disabled { color: var(--shade); text-shadow: 1px 1px #fff; }
.field, .combo { display: block; height: 23px; background: #fff; border: 1px solid; border-color: var(--shade) #fff #fff var(--shade); box-shadow: inset 1px 1px var(--dark), inset -1px -1px var(--face); }
.field { width: 100%; padding: 0 2px 4px; outline: 0; }
.off { background: var(--face); }
.combo { position: relative; display: flex; height: 21px; padding: 1px; }
.combo input { flex: 1; min-width: 0; padding: 0 1px 1px; border: 0; background: none; outline: 0; }
.caret input { background: linear-gradient(#000, #000) 1px 2px / 1px 14px no-repeat; }
.combo button, .bar button { display: grid; place-items: center; width: 16px; background: var(--face); border: 1px solid; border-color: #fff var(--dark) var(--dark) #fff; box-shadow: inset -1px -1px var(--shade); }
.combo button svg { width: 8px; height: 4px; }
.list { position: absolute; left: -1px; right: -1px; top: 20px; margin: 0; padding: 0; list-style: none; background: #fff; border: 1px solid #000; line-height: 13px; }
.list li { padding-left: 2px; }
.list li[aria-selected] { background: #0a246a; color: #fff; }

/* Queue fields */
.top { display: flex; gap: 41px; }
.names { width: 440px; padding-top: 21px; }
.names .combo { margin-top: 9px; }
.names .qname { margin-top: 3px; }
.names .caret { margin-top: 6px; }
.names .remote { margin-top: 29px; }
.side { padding-top: 26px; }
.info { display: flex; gap: 18px; padding-left: 9px; }
.info div { width: 60px; }
.info .field { margin-top: 4px; }
.ops { display: flex; gap: 15px; margin-top: 12px; }
.saves, .moves { display: flex; flex-direction: column; gap: 6px; width: 75px; }
.saves { padding-top: 33px; }
.moves { width: 62px; }
.moves .btn:first-child { margin-bottom: 1px; }
.selector { width: 504px; margin-top: 2px; }

/* Browse row */
.browse { display: flex; align-items: flex-start; gap: 6px; }
.browse .btn { margin-top: 14px; }
.w56 { width: 56px; } .w57 { width: 57px; } .w62 { width: 62px; }
.w72 { width: 72px; } .w75 { width: 75px; } .btn.w69 { width: 69px; }
.browse .closeq { margin-left: 5px; }

fieldset { min-width: 0; margin: 0; padding: 0 0 0 6px; border: 1px solid var(--shade); box-shadow: inset 1px 1px #fff, 1px 1px #fff; }
legend { padding: 0 2px; height: 14px; background: var(--face); white-space: nowrap; }
.panel fieldset label { display: flex; align-items: center; gap: 5px; height: 18px; padding-left: 4px; }
input[type="radio"], input[type="checkbox"] { appearance: none; flex: none; width: 12px; height: 12px; background: #fff; border: 1px solid; border-color: var(--shade) #fff #fff var(--shade); box-shadow: inset 1px 1px var(--dark); }
input[type="radio"] { border-radius: 50%; }
input[type="radio"]:checked { background: radial-gradient(circle, #000 2px, #fff 3px); }
input[type="checkbox"] { width: 13px; height: 13px; }
input[type="checkbox"]:checked::before { content: ""; display: block; width: 4px; height: 7px; margin: 0 0 0 4px; border: solid #000; border-width: 0 2px 2px 0; transform: rotate(40deg); }
.closeopts { width: 72px; margin: 3px 0 -39px 4px; padding-top: 4px; padding-bottom: 5px; }

/* File area */
.middle { display: flex; align-items: flex-start; margin-top: 10px; }
.file { width: 462px; }
.codepage { width: 60px; margin-top: 5px; }
.filerow { display: flex; gap: 15px; margin-top: 5px; }
.grow { flex: 1; }
.fname { margin-top: 7px; }
.size { width: 75px; }
.size .field { margin-top: 5px; }
.filebtns { display: flex; gap: 5px; margin-top: 11px; }
.filebtns .btn { width: 66px; }
.filebtns .wide { margin-left: 6px; }
.props { width: 85px; margin: 19px 0 0 15px; padding-top: 1px; padding-bottom: 9px; }
.panel .props label { height: 19px; }
.cluster { width: 101px; margin: 37px 0 0 9px; padding-top: 3px; padding-bottom: 11px; }

.bottom { display: flex; align-items: flex-start; gap: 24px; margin-top: 2px; }
.cobol { width: 397px; }
.cobol .field { width: 393px; margin-top: 4px; }
.log { display: flex; height: 120px; margin-top: 14px; padding: 1px; border: 1px solid; border-color: var(--shade) #fff #fff var(--shade); box-shadow: inset 1px 1px var(--dark); }
.log textarea { flex: 1; resize: none; border: 0; background: none; outline: 0; }
.bar { width: 16px; background: repeating-conic-gradient(#fff 0 25%, var(--face) 0 50%) 0 0 / 2px 2px; }
.bar button { height: 16px; }
.bar svg { width: 8px; height: 4px; fill: var(--shade); }
.putget { width: 223px; margin-top: 5px; padding-top: 2px; padding-bottom: 6px; }
.checks { display: grid; grid-template-columns: 105px auto; }

/* Annotations */
.marks { position: absolute; left: 0; top: 0; width: 570px; height: 640px; pointer-events: none; }
.note { position: absolute; margin: 0; color: #ed1c24; font: bold 11px/14px Lato, sans-serif; white-space: nowrap; }
.connect { left: 541px; top: 239px; }
.load { left: 451px; top: 506px; }

/* Taskbar */
.taskbar { display: flex; align-items: center; height: 28px; padding: 2px 2px 0; background: var(--face); box-shadow: inset 0 1px var(--face), inset 0 2px #fff; }
.task { display: flex; align-items: center; justify-content: center; width: 32px; height: 22px; background: var(--face); border: 1px solid; border-color: #fff var(--dark) var(--dark) #fff; box-shadow: inset -1px -1px var(--shade); }
.task svg { width: 16px; height: 16px; }
.start { width: 52px; gap: 2px; font-weight: bold; }
.tasks { display: flex; gap: 2px; margin-left: 9px; }
.multi { box-shadow: inset -1px -1px var(--shade), inset -3px 0 var(--face), inset -4px 0 var(--dark); padding-right: 3px; }
.current { background: #fff; border-color: var(--dark) #fff #fff var(--dark); box-shadow: inset 1px 1px var(--shade); }
.current svg { height: 12px; }
.tray { display: flex; align-items: center; gap: 7px; height: 22px; margin-left: auto; padding: 0 1px; border: 1px solid; border-color: var(--shade) #fff #fff var(--shade); }
.tray svg { width: 16px; height: 16px; }
.tray time { margin: 0 4px 0 9px; }
```
